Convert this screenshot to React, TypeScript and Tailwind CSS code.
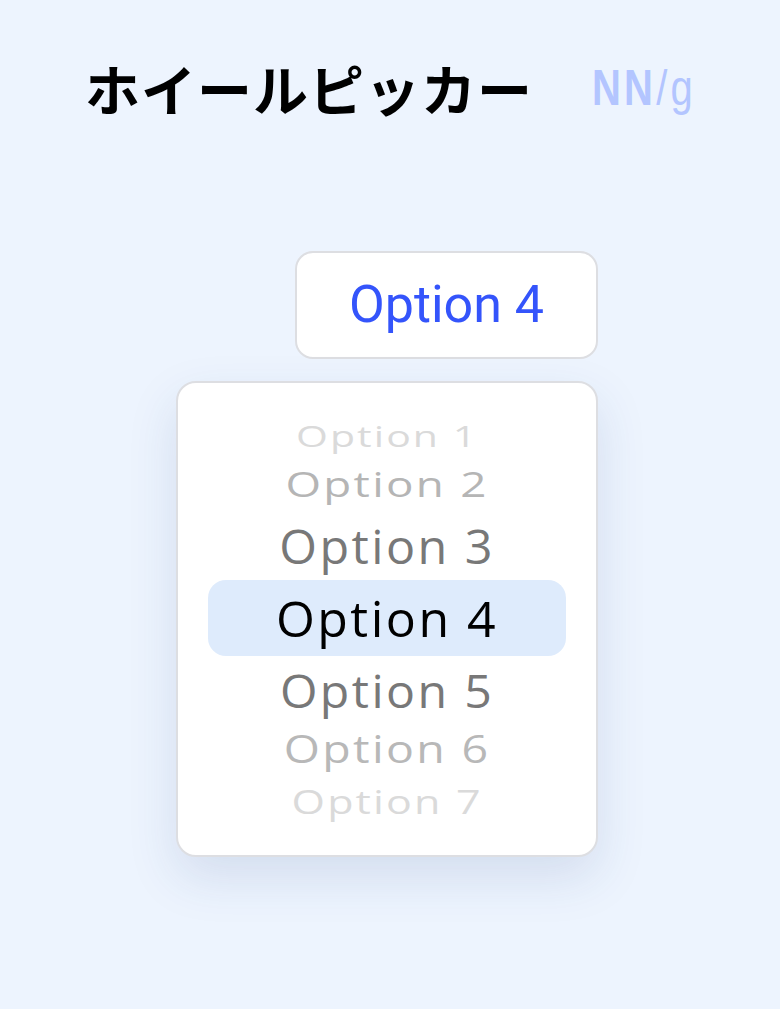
import React from 'react';

const rows = [
  { label: 'Option 1', h: 'h-[40px]', color: 'text-[#dadada]', tf: 'scale-x-[0.82] scale-y-[0.6]' },
  { label: 'Option 2', h: 'h-[56px]', color: 'text-[#b5b5b5]', tf: 'scale-x-[0.915] scale-y-[0.7]' },
  { label: 'Option 3', h: 'h-[68px]', color: 'text-[#787878]', tf: 'scale-x-[0.97] scale-y-[0.95]' },
];

const rowsBelow = [
  { label: 'Option 5', h: 'h-[70px]', color: 'text-[#787878]', tf: 'scale-x-[0.965] scale-y-[0.92]' },
  { label: 'Option 6', h: 'h-[46px]', color: 'text-[#b8b8b8]', tf: 'scale-x-[0.93] scale-y-[0.76]' },
  { label: 'Option 7', h: 'h-[60px]', color: 'text-[#dadada]', tf: 'scale-x-[0.86] scale-y-[0.64]' },
];

const Row = ({ label, h, color, tf }: { label: string; h: string; color: string; tf: string }) => (
  <div className={`${h} flex items-center justify-center`}>
    <span className={`${color} ${tf} text-[50px] leading-none tracking-[2.5px] inline-block`}>{label}</span>
  </div>
);

export default function App() {
  return (
    <div className="w-[780px] h-[1009px] bg-[#edf4fe] font-['Open_Sans',sans-serif]">
      <header className="flex items-center justify-between pl-[85px] pr-[84px] pt-[60px]">
        <h1 className="font-['Noto_Sans_CJK_JP',sans-serif] text-[55px] font-bold leading-none tracking-[1px] text-black">
          ホイールピッカー
        </h1>
        <div className="font-['Liberation_Sans',sans-serif] text-[50px] leading-none tracking-[4px] text-[#b3c5ff] scale-x-[0.8] origin-right">
          <span className="font-bold">NN</span>/g
        </div>
      </header>

      <main className="ml-[176px] mt-[136px] w-[422px] flex flex-col items-end gap-[22px]">
        <button className="w-[303px] h-[108px] rounded-[18px] border-2 border-[#dddee2] bg-white flex items-center justify-center">
          <span className="font-['Roboto',sans-serif] text-[52px] leading-none text-[#3454fb]">Option 4</span>
        </button>

        <div className="w-[422px] h-[476px] rounded-[20px] border-2 border-[#dddee2] bg-white shadow-[0_20px_50px_rgba(40,70,130,0.13)] pt-[33px]">
          {rows.map(r => (
            <Row key={r.label} {...r} />
          ))}
          <div className="mx-[30px] h-[76px] rounded-[18px] bg-[#deebfc] flex items-center justify-center">
            <span className="text-[50px] leading-none tracking-[2.5px] text-black">Option 4</span>
          </div>
          {rowsBelow.map(r => (
            <Row key={r.label} {...r} />
          ))}
        </div>
      </main>
    </div>
  );
}
